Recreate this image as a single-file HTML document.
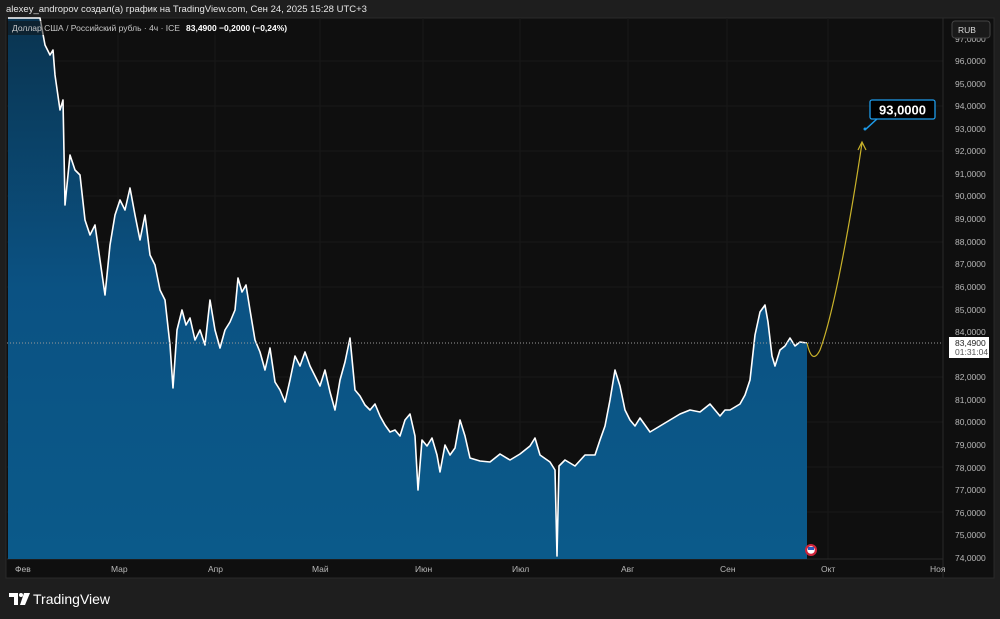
<!DOCTYPE html>
<html><head><meta charset="utf-8"><style>
html,body{margin:0;padding:0;background:#1e1e1e;width:1000px;height:619px;overflow:hidden;font-family:"Liberation Sans","Noto Sans CJK SC",sans-serif}
svg text{font-family:"Liberation Sans","DejaVu Sans",sans-serif}
</style></head><body>
<svg width="1000" height="619" viewBox="0 0 1000 619" xmlns="http://www.w3.org/2000/svg">
<defs>
<linearGradient id="g" x1="0" y1="0" x2="0" y2="1"><stop offset="0" stop-color="#0a3450"/><stop offset="0.5" stop-color="#0b5283"/><stop offset="1" stop-color="#0b5a8a"/></linearGradient>
</defs>
<rect width="1000" height="619" fill="#1e1e1e"/>
<text x="6" y="12" fill="#e6e6e6" font-size="9.5">alexey_andropov создал(а) график на TradingView.com, Сен 24, 2025 15:28 UTC+3</text>
<rect x="6" y="18" width="988" height="560" fill="#0f0f0f" stroke="#2a2a2a"/>
<g stroke="#181818" stroke-width="1">
<line x1="7" y1="61" x2="943" y2="61"/><line x1="7" y1="106" x2="943" y2="106"/><line x1="7" y1="151" x2="943" y2="151"/><line x1="7" y1="196" x2="943" y2="196"/><line x1="7" y1="242" x2="943" y2="242"/><line x1="7" y1="287" x2="943" y2="287"/><line x1="7" y1="377" x2="943" y2="377"/><line x1="7" y1="422" x2="943" y2="422"/><line x1="7" y1="467" x2="943" y2="467"/><line x1="7" y1="512" x2="943" y2="512"/>
<line x1="118" y1="18" x2="118" y2="559"/><line x1="215" y1="18" x2="215" y2="559"/><line x1="320" y1="18" x2="320" y2="559"/><line x1="423" y1="18" x2="423" y2="559"/><line x1="520" y1="18" x2="520" y2="559"/><line x1="628" y1="18" x2="628" y2="559"/><line x1="727" y1="18" x2="727" y2="559"/><line x1="828" y1="18" x2="828" y2="559"/>
</g>
<line x1="943" y1="18" x2="943" y2="578" stroke="#2a2a2a"/>
<line x1="7" y1="559" x2="943" y2="559" stroke="#2a2a2a"/>
<path d="M8,18 L40,18 45,45 50,55 53,50 55,75 60,110 63,100 65,205 70,155 75,170 80,175 85,220 90,235 95,225 100,260 105,295 110,245 115,215 120,200 125,210 130,188 135,215 140,240 145,215 150,255 155,265 160,290 165,300 170,345 173,388 177,330 182,310 186,325 190,318 195,340 200,330 205,345 210,300 215,330 220,348 225,330 230,322 235,310 238,278 242,292 246,285 250,310 255,340 260,352 265,370 270,348 275,382 280,390 285,402 290,380 295,356 300,366 305,352 310,366 315,376 320,386 325,370 330,392 335,410 340,380 345,362 350,338 355,390 360,396 365,405 370,410 375,404 380,416 385,425 390,432 395,430 400,436 405,420 410,414 415,436 418,490 422,440 427,446 432,438 437,455 440,472 445,445 450,455 455,448 460,420 465,436 470,458 480,461 490,462 500,454 510,460 520,454 530,446 535,438 540,455 550,462 555,470 557,556 559,466 565,460 575,466 585,455 595,455 600,440 605,426 610,400 615,370 620,386 625,410 630,420 635,426 640,418 650,432 660,426 670,420 680,414 690,410 700,412 710,404 720,416 725,410 730,410 740,404 745,395 750,380 755,335 760,312 765,305 768,322 772,356 775,366 780,350 785,346 790,338 795,346 800,342 807,343 L807,559 L8,559 Z" fill="url(#g)"/>
<path d="M8,18 L40,18 45,45 50,55 53,50 55,75 60,110 63,100 65,205 70,155 75,170 80,175 85,220 90,235 95,225 100,260 105,295 110,245 115,215 120,200 125,210 130,188 135,215 140,240 145,215 150,255 155,265 160,290 165,300 170,345 173,388 177,330 182,310 186,325 190,318 195,340 200,330 205,345 210,300 215,330 220,348 225,330 230,322 235,310 238,278 242,292 246,285 250,310 255,340 260,352 265,370 270,348 275,382 280,390 285,402 290,380 295,356 300,366 305,352 310,366 315,376 320,386 325,370 330,392 335,410 340,380 345,362 350,338 355,390 360,396 365,405 370,410 375,404 380,416 385,425 390,432 395,430 400,436 405,420 410,414 415,436 418,490 422,440 427,446 432,438 437,455 440,472 445,445 450,455 455,448 460,420 465,436 470,458 480,461 490,462 500,454 510,460 520,454 530,446 535,438 540,455 550,462 555,470 557,556 559,466 565,460 575,466 585,455 595,455 600,440 605,426 610,400 615,370 620,386 625,410 630,420 635,426 640,418 650,432 660,426 670,420 680,414 690,410 700,412 710,404 720,416 725,410 730,410 740,404 745,395 750,380 755,335 760,312 765,305 768,322 772,356 775,366 780,350 785,346 790,338 795,346 800,342 807,343" fill="none" stroke="#ffffff" stroke-width="1.6" stroke-linejoin="round"/>
<line x1="7" y1="343" x2="943" y2="343" stroke="#9a9a9a" stroke-dasharray="1,2"/>
<path d="M807,343 C810,356 814,362 820,350 C835,310 852,210 862,143" fill="none" stroke="#c9b22a" stroke-width="1.2"/>
<path d="M858,150 L862,142 L866,150" fill="none" stroke="#c9b22a" stroke-width="1.2"/>
<rect x="8" y="21" width="275" height="14" fill="#0f0f0f" opacity="0.5"/>
<text x="12" y="31" fill="#c8c8c8" font-size="8.5">Доллар США / Российский рубль · 4ч · ICE</text>
<text x="186" y="31" fill="#ffffff" font-size="8.5" font-weight="bold">83,4900  −0,2000 (−0,24%)</text>
<line x1="866" y1="129" x2="878" y2="118" stroke="#1e9be9" stroke-width="1.5"/>
<circle cx="865" cy="129" r="1.5" fill="#1e9be9"/>
<rect x="870" y="100" width="65" height="19" rx="2" fill="#000" stroke="#1e9be9" stroke-width="1.3"/>
<text x="902.5" y="114.5" fill="#fff" font-size="13" font-weight="bold" text-anchor="middle">93,0000</text>
<g fill="#b8b8b8" font-size="8.5">
<text x="955" y="64">96,0000</text><text x="955" y="109">94,0000</text><text x="955" y="132">93,0000</text><text x="955" y="154">92,0000</text><text x="955" y="177">91,0000</text><text x="955" y="199">90,0000</text><text x="955" y="222">89,0000</text><text x="955" y="245">88,0000</text><text x="955" y="267">87,0000</text><text x="955" y="290">86,0000</text><text x="955" y="313">85,0000</text><text x="955" y="335">84,0000</text><text x="955" y="380">82,0000</text><text x="955" y="403">81,0000</text><text x="955" y="425">80,0000</text><text x="955" y="448">79,0000</text><text x="955" y="471">78,0000</text><text x="955" y="493">77,0000</text><text x="955" y="516">76,0000</text><text x="955" y="538">75,0000</text><text x="955" y="561">74,0000</text><text x="955" y="87">95,0000</text><text x="955" y="42">97,0000</text>
</g>
<rect x="952" y="21" width="38" height="17" rx="3" fill="#1a1a1a" stroke="#444"/>
<text x="958" y="33" fill="#ddd" font-size="8.5">RUB</text>
<rect x="949" y="337" width="40" height="21" fill="#fff"/>
<text x="955" y="346" fill="#222" font-size="8.5">83,4900</text>
<text x="955" y="355" fill="#555" font-size="8.5">01:31:04</text>
<circle cx="811" cy="550" r="6" fill="#d0243a"/><circle cx="811" cy="550" r="3.8" fill="#fff"/><rect x="808" y="547" width="6" height="3" fill="#2c5bbf"/>
<g fill="#b8b8b8" font-size="8.5">
<text x="15" y="572">Фев</text><text x="111" y="572">Мар</text><text x="208" y="572">Апр</text><text x="312" y="572">Май</text><text x="415" y="572">Июн</text><text x="512" y="572">Июл</text><text x="621" y="572">Авг</text><text x="720" y="572">Сен</text><text x="821" y="572">Окт</text><text x="930" y="572">Ноя</text>
</g>
<path d="M9,593 H18 V605 H14 V597 H9 Z" fill="#fff"/>
<circle cx="21" cy="595" r="2" fill="#fff"/>
<path d="M24,593 L30,593 L25,605 L20,605 Z" fill="#fff"/>
<text x="33" y="604" fill="#fff" font-size="14">TradingView</text>
</svg>
</body></html>
